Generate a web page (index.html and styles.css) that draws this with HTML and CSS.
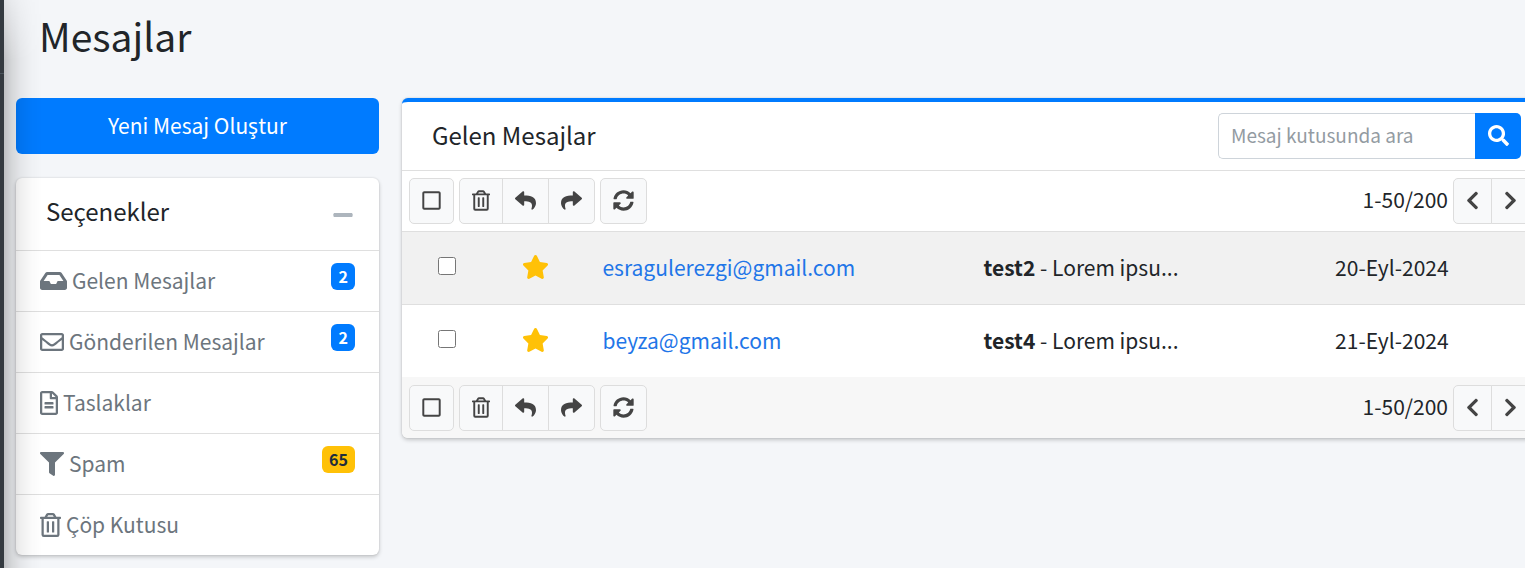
FILE: index.html
```html
<!DOCTYPE html>
<html lang="tr">
<head>
<meta charset="utf-8">
<title>Mesajlar</title>
<link rel="stylesheet" href="styles.css">
</head>
<body>
<svg class="sprite" aria-hidden="true">
  <symbol id="inbox" viewBox="0 0 576 512"><path d="M567.938 243.908L462.25 85.374A48.003 48.003 0 0 0 422.311 64H153.689a48 48 0 0 0-39.938 21.374L8.062 243.908A47.994 47.994 0 0 0 0 270.533V400c0 26.51 21.49 48 48 48h480c26.51 0 48-21.49 48-48V270.533a47.994 47.994 0 0 0-8.062-26.625zM162.252 128h251.497l85.333 128H376l-32 64H232l-32-64H76.918l85.334-128z"/></symbol>
  <symbol id="envelope" viewBox="0 0 512 512"><path d="M464 64H48C21.49 64 0 85.49 0 112v288c0 26.51 21.49 48 48 48h416c26.51 0 48-21.49 48-48V112c0-26.51-21.49-48-48-48zm0 48v40.805c-22.422 18.259-58.168 46.651-134.587 106.49-16.841 13.247-50.201 45.072-73.413 44.701-23.208.375-56.579-31.459-73.413-44.701C106.18 199.465 70.425 171.067 48 152.805V112h416zM48 400V214.398c22.914 18.251 55.409 43.862 104.938 82.646 21.857 17.205 60.134 55.186 103.062 54.955 42.717.231 80.509-37.199 103.053-54.947 49.528-38.783 82.032-64.401 104.947-82.653V400H48z"/></symbol>
  <symbol id="file" viewBox="0 0 384 512"><path d="M288 248v28c0 6.6-5.4 12-12 12H108c-6.6 0-12-5.4-12-12v-28c0-6.6 5.4-12 12-12h168c6.6 0 12 5.4 12 12zm-12 72H108c-6.6 0-12 5.4-12 12v28c0 6.6 5.4 12 12 12h168c6.6 0 12-5.4 12-12v-28c0-6.6-5.4-12-12-12zm108-188.1V464c0 26.5-21.5 48-48 48H48c-26.5 0-48-21.5-48-48V48C0 21.5 21.5 0 48 0h204.1C264.8 0 277 5.1 286 14.1L369.9 98c9 8.9 14.1 21.2 14.1 33.9zm-128-80V128h76.1L256 51.9zM336 464V176H232c-13.3 0-24-10.7-24-24V48H48v416h288z"/></symbol>
  <symbol id="filter" viewBox="0 0 512 512"><path d="M487.976 0H24.028C2.71 0-8.047 25.866 7.058 40.971L192 225.941V432c0 7.831 3.821 15.17 10.237 19.662l80 55.98C298.02 518.69 320 507.493 320 487.98V225.941l184.947-184.97C520.021 25.896 509.338 0 487.976 0z"/></symbol>
  <symbol id="trash" viewBox="0 0 448 512"><path d="M268 416h24a12 12 0 0 0 12-12V188a12 12 0 0 0-12-12h-24a12 12 0 0 0-12 12v216a12 12 0 0 0 12 12zM432 80h-82.41l-34-56.7A48 48 0 0 0 274.41 0H173.59a48 48 0 0 0-41.16 23.3L98.41 80H16A16 16 0 0 0 0 96v16a16 16 0 0 0 16 16h16v336a48 48 0 0 0 48 48h288a48 48 0 0 0 48-48V128h16a16 16 0 0 0 16-16V96a16 16 0 0 0-16-16zM171.84 50.91A6 6 0 0 1 177 48h94a6 6 0 0 1 5.15 2.91L293.61 80H154.39zM368 464H80V128h288zm-212-48h24a12 12 0 0 0 12-12V188a12 12 0 0 0-12-12h-24a12 12 0 0 0-12 12v216a12 12 0 0 0 12 12z"/></symbol>
  <symbol id="square" viewBox="0 0 448 512"><path d="M400 32H48C21.5 32 0 53.5 0 80v352c0 26.5 21.5 48 48 48h352c26.5 0 48-21.5 48-48V80c0-26.5-21.5-48-48-48zm-6 400H54c-3.3 0-6-2.7-6-6V86c0-3.3 2.7-6 6-6h340c3.3 0 6 2.7 6 6v340c0 3.3-2.7 6-6 6z"/></symbol>
  <symbol id="reply" viewBox="0 0 512 512"><path d="M8.309 189.836L184.313 37.851C199.719 24.546 224 35.347 224 56.015v80.053c160.629 1.839 288 34.032 288 186.258 0 61.441-39.581 122.309-83.333 154.132-13.653 9.931-33.111-2.533-28.077-18.631 45.344-145.012-21.507-183.51-176.59-185.742V360c0 20.7-24.3 31.453-39.687 18.164l-176.004-152c-11.071-9.562-11.086-26.753 0-36.328z"/></symbol>
  <symbol id="share" viewBox="0 0 512 512"><path transform="translate(512 0) scale(-1 1)" d="M8.309 189.836L184.313 37.851C199.719 24.546 224 35.347 224 56.015v80.053c160.629 1.839 288 34.032 288 186.258 0 61.441-39.581 122.309-83.333 154.132-13.653 9.931-33.111-2.533-28.077-18.631 45.344-145.012-21.507-183.51-176.59-185.742V360c0 20.7-24.3 31.453-39.687 18.164l-176.004-152c-11.071-9.562-11.086-26.753 0-36.328z"/></symbol>
  <symbol id="sync" viewBox="0 0 512 512"><path d="M370.72 133.28C339.458 104.008 298.888 87.962 255.848 88c-77.458.068-144.328 53.178-162.791 126.85-1.344 5.363-6.122 9.15-11.651 9.15H24.103c-7.498 0-13.194-6.807-11.807-14.176C33.933 94.924 134.813 8 256 8c66.448 0 126.791 26.136 171.315 68.685L463.03 40.97C478.149 25.851 504 36.559 504 57.941V192c0 13.255-10.745 24-24 24H345.941c-21.382 0-32.09-25.851-16.971-40.971l41.75-41.749zM32 296h134.059c21.382 0 32.09 25.851 16.971 40.971l-41.75 41.75c31.262 29.273 71.835 45.319 114.876 45.28 77.418-.07 144.315-53.144 162.787-126.849 1.344-5.363 6.122-9.15 11.651-9.15h57.304c7.498 0 13.194 6.807 11.807 14.176C478.067 417.076 377.187 504 256 504c-66.448 0-126.791-26.136-171.315-68.685L48.97 471.03C33.851 486.149 8 475.441 8 454.059V320c0-13.255 10.745-24 24-24z"/></symbol>
  <symbol id="search" viewBox="0 0 512 512"><path d="M505 442.7L405.3 343c-4.5-4.5-10.6-7-17-7H372c27.6-35.3 44-79.7 44-128C416 93.1 322.9 0 208 0S0 93.1 0 208s93.1 208 208 208c48.3 0 92.7-16.4 128-44v16.3c0 6.4 2.5 12.5 7 17l99.7 99.7c9.4 9.4 24.6 9.4 33.9 0l28.3-28.3c9.4-9.4 9.4-24.6.1-34zM208 336c-70.7 0-128-57.2-128-128 0-70.7 57.2-128 128-128 70.7 0 128 57.2 128 128 0 70.7-57.2 128-128 128z"/></symbol>
  <symbol id="prev" viewBox="0 0 320 512"><path d="M34.52 239.03L228.87 44.69c9.37-9.37 24.57-9.37 33.94 0l22.67 22.67c9.36 9.36 9.37 24.52.04 33.9L131.49 256l154.02 154.75c9.34 9.38 9.32 24.54-.04 33.9l-22.67 22.67c-9.37 9.37-24.57 9.37-33.94 0L34.52 272.97c-9.37-9.37-9.37-24.57 0-33.94z"/></symbol>
  <symbol id="next" viewBox="0 0 320 512"><path transform="translate(320 0) scale(-1 1)" d="M34.52 239.03L228.87 44.69c9.37-9.37 24.57-9.37 33.94 0l22.67 22.67c9.36 9.36 9.37 24.52.04 33.9L131.49 256l154.02 154.75c9.34 9.38 9.32 24.54-.04 33.9l-22.67 22.67c-9.37 9.37-24.57 9.37-33.94 0L34.52 272.97c-9.37-9.37-9.37-24.57 0-33.94z"/></symbol>
  <symbol id="star" viewBox="0 0 576 512"><path d="M259.3 17.8L194 150.2 47.9 171.5c-26.2 3.8-36.7 36.1-17.7 54.6l105.7 103-25 145.5c-4.5 26.3 23.2 46 46.4 33.7L288 439.6l130.7 68.7c23.2 12.2 50.9-7.4 46.4-33.7l-25-145.5 105.7-103c19-18.5 8.5-50.8-17.7-54.6L382 150.2 316.7 17.8c-11.7-23.6-45.6-23.9-57.4 0z"/></symbol>
  <symbol id="minus" viewBox="0 0 448 512"><path d="M416 208H32c-17.67 0-32 14.33-32 32v32c0 17.67 14.33 32 32 32h384c17.67 0 32-14.33 32-32v-32c0-17.67-14.33-32-32-32z"/></symbol>
</svg>
<div class="wrapper">
  <aside class="main-sidebar"><div class="brand-line"></div></aside>
  <main class="content">
    <h1 class="page-title">Mesajlar</h1>
    <div class="columns">
      <div class="options">
        <button class="compose" type="button">Yeni Mesaj Oluştur</button>
        <section class="card">
          <header class="options-header">
            <h2 class="card-title">Seçenekler</h2>
            <button class="collapse" type="button" aria-label="Daralt"><svg class="icon icon-minus"><use href="#minus"/></svg></button>
          </header>
          <nav class="folders">
            <a class="folder" href="#gelen"><svg class="icon folder-icon wide"><use href="#inbox"/></svg><span class="folder-name">Gelen Mesajlar</span><span class="badge">2</span></a>
            <a class="folder" href="#gonderilen"><svg class="icon folder-icon"><use href="#envelope"/></svg><span class="folder-name">Gönderilen Mesajlar</span><span class="badge">2</span></a>
            <a class="folder" href="#taslaklar"><svg class="icon folder-icon narrow"><use href="#file"/></svg><span class="folder-name">Taslaklar</span></a>
            <a class="folder" href="#spam"><svg class="icon folder-icon"><use href="#filter"/></svg><span class="folder-name">Spam</span><span class="badge warning">65</span></a>
            <a class="folder" href="#cop"><svg class="icon folder-icon medium"><use href="#trash"/></svg><span class="folder-name">Çöp Kutusu</span></a>
          </nav>
        </section>
      </div>
      <section class="card mailbox">
        <header class="mailbox-header">
          <h2 class="card-title">Gelen Mesajlar</h2>
          <form class="search">
            <input class="search-input" type="text" placeholder="Mesaj kutusunda ara" aria-label="Mesaj kutusunda ara">
            <button class="search-button" type="button" aria-label="Ara"><svg class="icon tool-icon"><use href="#search"/></svg></button>
          </form>
        </header>
        <div class="controls">
          <button class="tool" type="button" aria-label="Tümünü seç"><svg class="icon tool-icon square"><use href="#square"/></svg></button>
          <div class="tool-group">
            <button class="tool" type="button" aria-label="Sil"><svg class="icon tool-icon bin"><use href="#trash"/></svg></button>
            <button class="tool" type="button" aria-label="Yanıtla"><svg class="icon tool-icon"><use href="#reply"/></svg></button>
            <button class="tool" type="button" aria-label="İlet"><svg class="icon tool-icon"><use href="#share"/></svg></button>
          </div>
          <button class="tool" type="button" aria-label="Yenile"><svg class="icon tool-icon"><use href="#sync"/></svg></button>
          <span class="range">1-50/200</span>
          <div class="tool-group">
            <button class="tool" type="button" aria-label="Önceki"><svg class="icon tool-icon chevron"><use href="#prev"/></svg></button>
            <button class="tool" type="button" aria-label="Sonraki"><svg class="icon tool-icon chevron"><use href="#next"/></svg></button>
          </div>
        </div>
        <table class="messages">
          <colgroup><col class="col-check"><col class="col-star"><col class="col-name"><col class="col-subject"><col></colgroup>
          <tbody>
            <tr>
              <td class="check-cell"><input class="check" type="checkbox" aria-label="test2 mesajını seç"></td>
              <td><a class="star" href="#star" aria-label="Yıldız"><svg class="icon star-icon"><use href="#star"/></svg></a></td>
              <td><a class="sender" href="#mail">esragulerezgi@gmail.com</a></td>
              <td><b>test2</b> - Lorem ipsu...</td>
              <td>20-Eyl-2024</td>
            </tr>
            <tr>
              <td class="check-cell"><input class="check" type="checkbox" aria-label="test4 mesajını seç"></td>
              <td><a class="star" href="#star" aria-label="Yıldız"><svg class="icon star-icon"><use href="#star"/></svg></a></td>
              <td><a class="sender" href="#mail">beyza@gmail.com</a></td>
              <td><b>test4</b> - Lorem ipsu...</td>
              <td>21-Eyl-2024</td>
            </tr>
          </tbody>
        </table>
        <footer class="controls controls-footer">
          <button class="tool" type="button" aria-label="Tümünü seç"><svg class="icon tool-icon square"><use href="#square"/></svg></button>
          <div class="tool-group">
            <button class="tool" type="button" aria-label="Sil"><svg class="icon tool-icon bin"><use href="#trash"/></svg></button>
            <button class="tool" type="button" aria-label="Yanıtla"><svg class="icon tool-icon"><use href="#reply"/></svg></button>
            <button class="tool" type="button" aria-label="İlet"><svg class="icon tool-icon"><use href="#share"/></svg></button>
          </div>
          <button class="tool" type="button" aria-label="Yenile"><svg class="icon tool-icon"><use href="#sync"/></svg></button>
          <span class="range">1-50/200</span>
          <div class="tool-group">
            <button class="tool" type="button" aria-label="Önceki"><svg class="icon tool-icon chevron"><use href="#prev"/></svg></button>
            <button class="tool" type="button" aria-label="Sonraki"><svg class="icon tool-icon chevron"><use href="#next"/></svg></button>
          </div>
        </footer>
      </section>
    </div>
  </main>
</div>
</body>
</html>
```

FILE: styles.css
```css
* {
  box-sizing: border-box;
}

body {
  margin: 0;
  overflow: hidden;
  background: #f4f6f9;
  color: #212529;
  font-family: "Noto Sans CJK SC", "Noto Sans", sans-serif;
  font-size: 21px;
  line-height: 36px;
}

button,
input {
  font: inherit;
}

.sprite {
  display: none;
}

.icon {
  display: block;
  flex: none;
  fill: currentColor;
}

.wrapper {
  display: flex;
  min-height: 100vh;
}

.main-sidebar {
  position: relative;
  flex: none;
  width: 4px;
  padding-top: 73px;
  background: #343a40;
}

/* Shadow the sidebar casts over the content */
.main-sidebar::after {
  content: "";
  position: absolute;
  top: 0;
  bottom: 0;
  left: 4px;
  width: 38px;
  background: linear-gradient(to right, rgba(0, 0, 0, .22), rgba(0, 0, 0, .13) 20%, rgba(0, 0, 0, .06) 45%, rgba(0, 0, 0, .02) 72%, rgba(0, 0, 0, 0));
  -webkit-mask-image: linear-gradient(to bottom, rgba(0, 0, 0, .35), #000 60px);
  mask-image: linear-gradient(to bottom, rgba(0, 0, 0, .35), #000 60px);
  pointer-events: none;
}

.brand-line {
  height: 1px;
  background: #4b545c;
}

.content {
  flex: 1;
  min-width: 0;
  padding: 5px 0 12px 12px;
}

.page-title {
  margin: 0 0 33px;
  padding-left: 23px;
  font-size: 39px;
  font-weight: 400;
  line-height: 60px;
}

/* The mailbox runs slightly past the right edge of the window */
.columns {
  display: grid;
  grid-template-columns: minmax(0, 8fr) minmax(0, 25fr);
  gap: 23px;
  align-items: start;
  margin-right: -11px;
}

.options {
  display: flex;
  flex-direction: column;
  gap: 24px;
}

.compose {
  height: 56px;
  padding: 0 0 2px;
  border: 0;
  border-radius: 6px;
  background: #007bff;
  color: #fff;
}

.card {
  overflow: hidden;
  border-radius: 6px;
  background: #fff;
  box-shadow: 0 0 2px rgba(0, 0, 0, .13), 0 2px 4px rgba(0, 0, 0, .2);
}

.card-title {
  margin: 0;
  padding-bottom: 2px;
  font-size: 24px;
  font-weight: 400;
  line-height: 34px;
}

.options-header {
  display: flex;
  align-items: center;
  justify-content: space-between;
  padding: 16px 26px 20px 30px;
}

.collapse {
  padding: 6px 0 0;
  border: 0;
  background: none;
  color: #adb5bd;
}

.icon-minus {
  width: 20px;
  height: 22px;
}

.folder {
  display: flex;
  align-items: center;
  gap: 5px;
  padding: 12px 24px;
  border-top: 1px solid #dfdfdf;
  color: #6c757d;
  text-decoration: none;
}

.folder-name {
  padding-bottom: 2px;
  line-height: 34px;
}

.folder-icon {
  width: 24px;
  height: 24px;
}

.wide {
  width: 27px;
}

.medium {
  width: 21px;
}

.narrow {
  width: 18px;
}

.badge {
  align-self: flex-start;
  margin-left: auto;
  padding: 0 7px;
  border-radius: 6px;
  background: #007bff;
  color: #fff;
  font-size: 16px;
  font-weight: 700;
  line-height: 27px;
}

.warning {
  background: #ffc107;
  color: #1f2d3d;
}

.mailbox {
  border-top: 4px solid #007bff;
}

.mailbox-header {
  display: flex;
  align-items: center;
  justify-content: space-between;
  padding: 11px 15px 11px 30px;
  border-bottom: 1px solid #dfdfdf;
}

.search {
  display: flex;
  width: 303px;
  height: 46px;
}

.search-input {
  flex: 1;
  min-width: 0;
  padding: 0 12px 2px;
  border: 1px solid #ced4da;
  border-right: 0;
  border-radius: 5px 0 0 5px;
  background: #fff;
  color: #495057;
  font-size: 19px;
}

.search-input::placeholder {
  color: #939ba2;
}

.search-button {
  display: flex;
  align-items: center;
  justify-content: center;
  width: 46px;
  padding: 0 0 2px;
  border: 0;
  border-radius: 0 5px 5px 0;
  background: #007bff;
  color: #fff;
}

.controls {
  display: flex;
  align-items: center;
  gap: 5px;
  padding: 7px 6px 7px 7px;
  border-bottom: 1px solid #dfdfdf;
}

.controls-footer {
  padding-top: 8px;
  border-bottom: 0;
  background: #f7f7f7;
}

.tool {
  display: flex;
  align-items: center;
  justify-content: center;
  height: 46px;
  padding: 0 12px 2px;
  border: 1px solid #ddd;
  border-radius: 5px;
  background: #f8f9fa;
  color: #444;
}

.tool-group {
  display: flex;
}

.tool-group .tool + .tool {
  margin-left: -1px;
  border-top-left-radius: 0;
  border-bottom-left-radius: 0;
}

.tool-group .tool:not(:last-child) {
  border-top-right-radius: 0;
  border-bottom-right-radius: 0;
}

.tool-icon {
  width: 21px;
  height: 21px;
}

.square {
  width: 19px;
}

.bin {
  width: 18px;
}

.chevron {
  width: 13px;
}

.range {
  margin-left: auto;
  padding-bottom: 4px;
}

.messages {
  width: 100%;
  border-collapse: collapse;
  table-layout: fixed;
}

.col-check {
  width: 9%;
}

.col-star {
  width: 7.1%;
}

.col-name {
  width: 33.6%;
}

.col-subject {
  width: 31%;
}

.messages td {
  padding: 17px 18px 19px;
  vertical-align: middle;
}

.messages tr:first-child {
  border-bottom: 1px solid #dfdfdf;
  background: #f1f1f1;
}

.messages .check-cell {
  padding-left: 36px;
}

.check {
  display: block;
  width: 18px;
  height: 18px;
  margin: 0 0 2px;
}

.star {
  color: #ffc107;
}

.star-icon {
  width: 27px;
  height: 24px;
}

.sender {
  color: #1f76e8;
  text-decoration: none;
}
```
